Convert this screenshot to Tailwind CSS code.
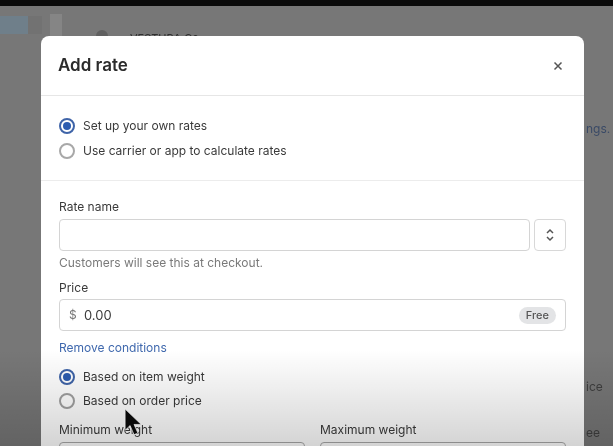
<!DOCTYPE html>
<html lang="en">
<head>
<meta charset="UTF-8">
<meta name="viewport" content="width=device-width, initial-scale=1.0">
<title>Add rate</title>
<script src="https://cdn.jsdelivr.net/npm/@tailwindcss/browser@4"></script>
</head>
<body class="w-[613px] h-[446px] overflow-hidden bg-[#767676] font-['Inter','Liberation_Sans',sans-serif]">
<div class="relative w-[613px] h-[446px] overflow-hidden blur-[0.5px]">
    <!-- top bar -->
    <div class="h-[6px] bg-[#0b0b0b]"></div>

    <!-- page behind the modal -->
    <div class="relative h-[440px] bg-[#777777] text-[#3f3f3f] text-[12px]">
        <div class="absolute left-0 top-[10px] w-[28px] h-[18px] bg-[#6f7f8a]"></div>
        <div class="absolute left-[28px] top-[10px] w-[14px] h-[18px] bg-[#727272]"></div>
        <div class="absolute left-[50px] top-[8px] w-[12px] h-[22px] bg-[#858585]"></div>
        <div class="absolute left-[96px] top-[24px] size-[12px] rounded-full bg-[#606060]"></div>
        <div class="absolute left-[130px] top-[24px] text-[11px] text-[#2f2f2f]">VESTURA Co-</div>
        <div class="absolute left-[586px] top-[114px] text-[#3a4a66]">ngs.</div>
        <div class="absolute left-[586px] top-[372px]">ice</div>
        <div class="absolute left-[586px] top-[418px]">ee</div>
    </div>

    <!-- modal -->
    <div class="absolute left-[41px] top-[36px] w-[543px] h-[430px] rounded-t-[8px] bg-white">
        <div class="flex items-center justify-between h-[60px] pl-[17px] pr-[21px] border-b border-[#e6e6e6]">
            <h1 class="text-[17px] font-semibold text-[#2b2b2b] mt-[1px]">Add rate</h1>
            <svg width="10" height="10" viewBox="0 0 10 10" fill="none" stroke="#555" stroke-width="1.5"><path d="M1.5 1.5l7 7M8.5 1.5l-7 7"/></svg>
        </div>

        <div class="h-[85px] px-[18px] pt-[17px] border-b border-[#ececec] text-[12px] text-[#3a3a3a]">
            <label class="flex items-center gap-[8px] h-[25px]">
                <span class="flex items-center justify-center size-[16px] rounded-full border-2 border-[#3f64a8]"><span class="size-[8px] rounded-full bg-[#2c5cb0]"></span></span>
                Set up your own rates
            </label>
            <label class="flex items-center gap-[8px] h-[25px]">
                <span class="size-[16px] rounded-full border-2 border-[#a8a8a8]"></span>
                Use carrier or app to calculate rates
            </label>
        </div>

        <div class="px-[18px] pt-[17px] text-[12px] text-[#3a3a3a]">
            <div class="h-[21px]">Rate name</div>
            <div class="flex gap-[4px]">
                <div class="flex-1 h-[32px] rounded-[4px] border border-[#d4d4d4]"></div>
                <div class="flex items-center justify-center w-[32px] h-[32px] rounded-[4px] border border-[#d8d8d8]">
                    <svg width="10" height="14" viewBox="0 0 10 14" fill="none" stroke="#555" stroke-width="1.5"><path d="M2 5l3-3 3 3M2 9l3 3 3-3"/></svg>
                </div>
            </div>
            <div class="mt-[2px] h-[20px] leading-[20px] text-[#7a7a7a]">Customers will see this at checkout.</div>
            <div class="mt-[5px] h-[21px] leading-[19px]">Price</div>
            <div class="flex items-center h-[32px] pl-[9px] pr-[9px] rounded-[4px] border border-[#d4d4d4]">
                <span class="w-[15px] text-[#777777]">$</span>
                <span class="text-[13px] mt-[1px]">0.00</span>
                <span class="ml-auto flex items-center h-[17px] px-[7px] rounded-full bg-[#e3e4e6] text-[11px] font-medium text-[#555555]">Free</span>
            </div>
            <div class="mt-[7px] h-[20px] leading-[20px] text-[#3f68ad]">Remove conditions</div>
            <label class="flex items-center gap-[8px] h-[25px] mt-[6px]">
                <span class="flex items-center justify-center size-[16px] rounded-full border-2 border-[#3f64a8]"><span class="size-[8px] rounded-full bg-[#2c5cb0]"></span></span>
                Based on item weight
            </label>
            <label class="flex items-center gap-[8px] h-[25px] mt-[-1px]">
                <span class="size-[16px] rounded-full border-2 border-[#a0a0a0]"></span>
                Based on order price
            </label>
            <div class="grid grid-cols-2 gap-[15px] mt-[7px]">
                <div>
                    <div class="h-[22px] leading-[20px]">Minimum weight</div>
                    <div class="h-[32px] rounded-[4px] border border-[#a8a8a8]"></div>
                </div>
                <div>
                    <div class="h-[22px] leading-[20px]">Maximum weight</div>
                    <div class="h-[32px] rounded-[4px] border border-[#a8a8a8]"></div>
                </div>
            </div>
        </div>
    </div>

    <!-- dark fade along the bottom of the video frame -->
    <div class="absolute left-0 right-0 bottom-0 h-[96px] bg-gradient-to-b from-black/0 to-black/17"></div>

    <!-- mouse pointer -->
    <svg class="absolute left-[124px] top-[408px]" width="20" height="30" viewBox="0 0 18 27"><path d="M1 1v19l4.5-4.2 3.5 8.2 3.5-1.5-3.5-7.7h6.5z" fill="#0a0a0a" stroke="#eee" stroke-width="0.6"/></svg>
</div>
</body>
</html>
